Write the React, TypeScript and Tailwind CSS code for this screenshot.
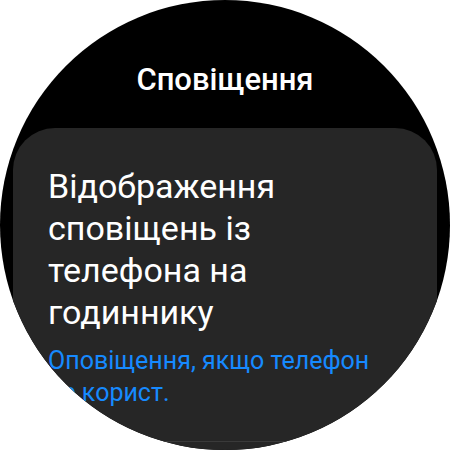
export default function App() {
  return (
    <div className="w-[450px] h-[450px] bg-white" style={{ fontFamily: "Roboto, 'Noto Sans', sans-serif" }}>
      <div className="w-[450px] h-[450px] rounded-full bg-black overflow-hidden flex flex-col">
        <h1 className="pt-[60px] text-center text-[31px] leading-[40px] font-medium text-white">
          Сповіщення
        </h1>
        <div className="mx-[13px] mt-[28px] flex-1 rounded-t-[42px] bg-[#262626]">
          <div className="pl-[35px] pr-[45px] pt-[37px] pb-[32px]">
            <p className="text-[34px] leading-[42px] text-white">
              Відображення сповіщень із телефона на годиннику
            </p>
            <p className="mt-[12px] text-[25px] leading-[32px] text-[#168aff]">
              Оповіщення, якщо телефон не корист.
            </p>
          </div>
          <div className="h-px bg-[#3a3a3a]" />
        </div>
      </div>
    </div>
  );
}
